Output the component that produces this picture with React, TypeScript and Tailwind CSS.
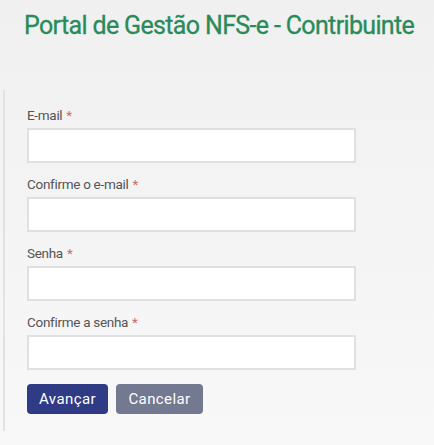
import React from "react";

const fields = ["E-mail", "Confirme o e-mail", "Senha", "Confirme a senha"];

export default function App() {
  return (
    <div
      className="w-[434px] h-[445px] overflow-hidden bg-gradient-to-b from-[#f0f0f0] to-[#f8f8f8]"
      style={{ fontFamily: "Roboto, 'Liberation Sans', sans-serif" }}
    >
      <div className="pt-[11px] pl-[24px] h-[90px]">
        <h1 className="text-[25px] leading-[30px] tracking-[-0.65px] text-[#2a8a5a] font-normal whitespace-nowrap [-webkit-text-stroke:0.3px_#2a8a5a]">
          Portal de Gestão NFS-e - Contribuinte
        </h1>
      </div>
      <div className="ml-[3px] border-l-2 border-[#e2e2e2] pl-[22px] pt-[15px] pb-[17px]">
        {fields.map((f) => (
          <div key={f} className="mb-[11px]">
            <label className="block text-[13.5px] leading-[20px] tracking-[-0.3px] text-[#555555]">
              {f}
              <span className="ml-[4px] text-[#cc6a68]">*</span>
            </label>
            <input
              type="text"
              className="mt-[3px] block w-[329px] h-[35px] bg-white border-2 border-[#e0e0e0] outline-none"
            />
          </div>
        ))}
        <div className="flex gap-[8px] mt-[14px]">
          <button className="h-[30px] w-[81px] rounded-[4px] bg-[#2f3b85] text-white text-[15px] font-normal tracking-[0.4px]">
            Avançar
          </button>
          <button className="h-[30px] w-[87px] rounded-[4px] bg-[#737991] text-white text-[15px] font-normal tracking-[0.4px]">
            Cancelar
          </button>
        </div>
      </div>
    </div>
  );
}
